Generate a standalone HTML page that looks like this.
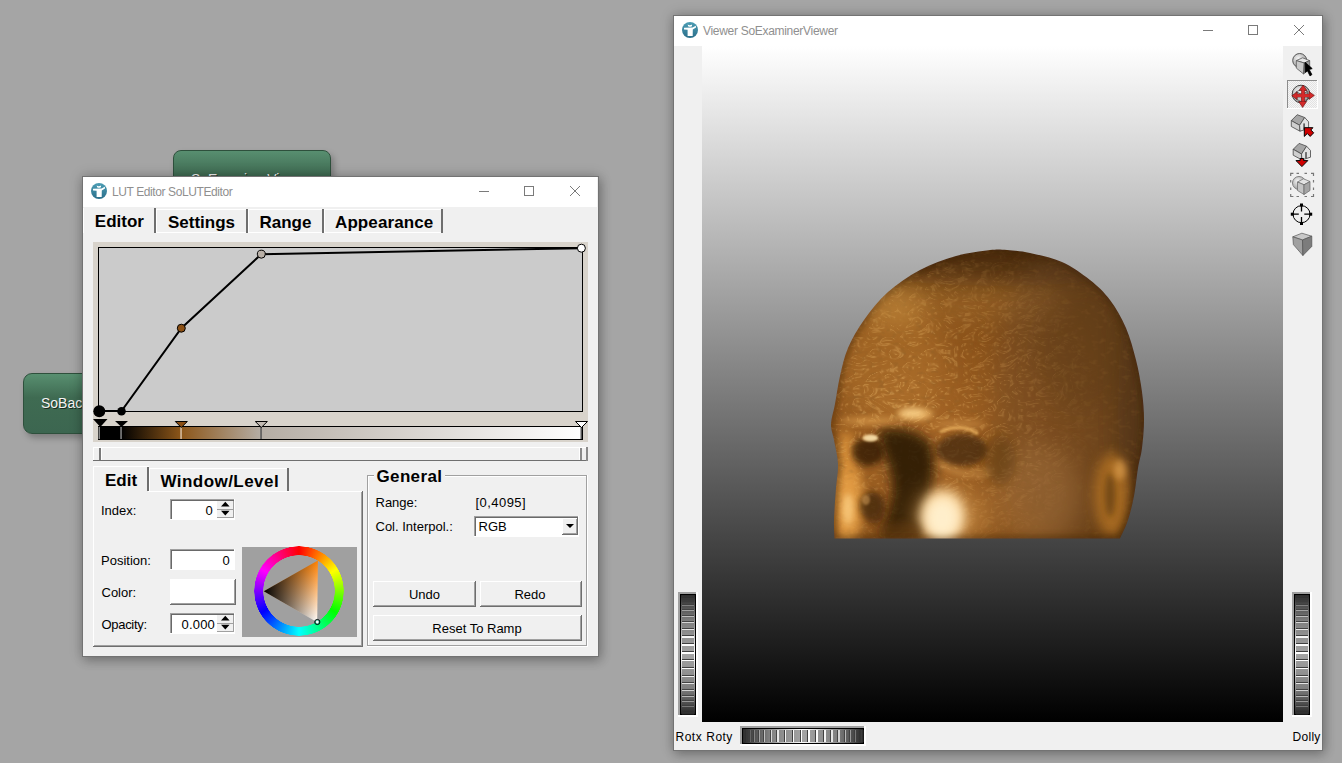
<!DOCTYPE html>
<html><head><meta charset="utf-8"><style>
*{box-sizing:border-box;margin:0;padding:0}
html,body{width:1342px;height:763px;overflow:hidden}
body{background:#a5a5a5;position:relative;font-family:"Liberation Sans",sans-serif;color:#000}
.node{position:absolute;border:1px solid #2e503c;border-radius:8px;background:linear-gradient(#588f70,#3f6b52 40%,#3c6650);box-shadow:3px 4px 6px rgba(0,0,0,.25);overflow:hidden}
.node span{position:absolute;white-space:pre;line-height:1;color:#f4f4f4;font-size:14px;text-shadow:1px 1px 0 #1a2a20}
.win{position:absolute;background:#f0f0f0;border:1px solid #737373;box-shadow:0 0 12px rgba(0,0,0,.22),2px 4px 10px rgba(0,0,0,.2)}
svg{position:absolute;left:0;top:0}
text{font-family:"Liberation Sans",sans-serif;white-space:pre}
.b{font-weight:bold;font-size:17px}
.l{font-size:13px}
.ttl{font-size:12px;fill:#8f8f8f}
</style></head><body>

<div class="node" style="left:173px;top:150px;width:158px;height:62px"><span style="left:17px;top:21px">SoExaminerViewer</span></div>
<div class="node" style="left:23px;top:373px;width:170px;height:61px;border-radius:9px"><span style="left:17px;top:22px">SoBackground</span></div>

<div class="win" style="left:82px;top:176px;width:517px;height:481px"></div>
<div class="win" style="left:673px;top:15px;width:650px;height:736px"></div>

<svg width="1342" height="763" viewBox="0 0 1342 763" shape-rendering="crispEdges">
<defs>
  <linearGradient id="icog" x1="0" y1="0" x2="0" y2="1"><stop offset="0" stop-color="#4c9db4"/><stop offset="1" stop-color="#2b6f8b"/></linearGradient>
  <g id="ico">
    <circle cx="0" cy="0" r="8" fill="url(#icog)" shape-rendering="geometricPrecision"/>
    <path d="M-2.3,-5.4 Q0,-4.2 2.1,-5.6 L1.9,-3.7 Q0,-2.6 -1.9,-3.7 Z M-6,-2.2 L2.5,-2.4 L5.9,-4.3 L6,-2.6 L2.8,-0.6 L2.7,6 L-2.4,6 L-2.4,-0.2 L-6,-0.4 Z" fill="#fff" shape-rendering="geometricPrecision"/>
  </g>
  <linearGradient id="vpg" x1="0" y1="0" x2="0" y2="1"><stop offset="0" stop-color="#fff"/><stop offset="1" stop-color="#000"/></linearGradient>
  <linearGradient id="cbar" x1="98" y1="0" x2="582" y2="0" gradientUnits="userSpaceOnUse">
    <stop offset="0.0475" stop-color="#000"/>
    <stop offset="0.171" stop-color="#8c5619"/>
    <stop offset="0.336" stop-color="#b5ada4"/>
    <stop offset="1" stop-color="#fff"/>
  </linearGradient>
</defs>

<!-- ============ LUT EDITOR ============ -->
<rect x="83" y="177" width="514" height="30" fill="#fff"/>
<use href="#ico" x="99" y="191"/>
<text class="ttl" x="112" y="196" letter-spacing="-0.4">LUT Editor SoLUTEditor</text>
<g fill="none" stroke="#7a7a7a" stroke-width="1">
  <path d="M479,191.5 H489"/>
  <rect x="524.5" y="186.5" width="9" height="9"/>
  <path d="M570,186 L580,196 M580,186 L570,196" shape-rendering="geometricPrecision"/>
</g>

<!-- tabs -->
<g>
  <rect x="83" y="208" width="72" height="25" fill="#f0f0f0"/>
  <rect x="83" y="208" width="1" height="25" fill="#fff"/>
  <rect x="155" y="209" width="286" height="24" fill="#fff"/>
  <rect x="157" y="210" width="89" height="22" fill="#f0f0f0"/>
  <rect x="249" y="210" width="73" height="22" fill="#f0f0f0"/>
  <rect x="325" y="210" width="116" height="22" fill="#f0f0f0"/>
  <rect x="154" y="208" width="2" height="25" fill="#6e6e6e"/>
  <rect x="246" y="209" width="2" height="24" fill="#6e6e6e"/>
  <rect x="322" y="209" width="2" height="24" fill="#6e6e6e"/>
  <rect x="441" y="209" width="2" height="24" fill="#6e6e6e"/>
</g>
<text class="b" x="94.8" y="227">Editor</text>
<text class="b" x="168" y="228">Settings</text>
<text class="b" x="259.5" y="228">Range</text>
<text class="b" x="335" y="228" letter-spacing="0.1">Appearance</text>

<!-- plot -->
<rect x="93" y="242" width="495" height="200" fill="#d8d3cb"/>
<rect x="98" y="247" width="485" height="165" fill="#000"/>
<rect x="99" y="248" width="483" height="163" fill="#cbcbcb"/>
<rect x="98" y="426" width="485" height="14" fill="#000"/>
<rect x="98" y="427" width="484" height="12" fill="url(#cbar)"/>
<g shape-rendering="geometricPrecision">
  <polyline points="99,411 121.5,411 181.3,328.2 261.3,254.2 581.5,248.2" fill="none" stroke="#000" stroke-width="2"/>
  <circle cx="99.3" cy="411.3" r="6" fill="#000"/>
  <circle cx="121.5" cy="411.3" r="4.3" fill="#000"/>
  <circle cx="181.3" cy="328.2" r="4" fill="#8b4f13" stroke="#000" stroke-width="1"/>
  <circle cx="261.3" cy="254.2" r="4" fill="#b9b0a7" stroke="#000" stroke-width="1"/>
  <circle cx="581.4" cy="248.2" r="4" fill="#fff" stroke="#000" stroke-width="1"/>
  <!-- markers -->
  <rect x="98.5" y="427" width="1.5" height="12" fill="#888"/>
  <rect x="120.3" y="427" width="1.5" height="12" fill="#888"/>
  <rect x="180.3" y="427" width="1.5" height="12" fill="#d9c1a6"/>
  <rect x="260.3" y="427" width="1.5" height="12" fill="#555"/>
  <rect x="580.5" y="427" width="1.5" height="12" fill="#555"/>
  <path d="M93,419 H107.5 L100.3,427 Z" fill="#000"/>
  <path d="M115,421 H128 L121.5,427 Z" fill="#000"/>
  <path d="M175.3,421.5 H187.3 L181.3,427.5 Z" fill="#8b4f13" stroke="#000" stroke-width="1"/>
  <path d="M255.3,421.5 H267.3 L261.3,427.5 Z" fill="#c4bcb4" stroke="#000" stroke-width="1"/>
  <path d="M575.5,421.5 H587.5 L581.5,427.5 Z" fill="#fff" stroke="#000" stroke-width="1"/>
</g>

<!-- range slider -->
<rect x="93" y="447" width="495" height="14" fill="#6f6f6f"/>
<rect x="93" y="447" width="494" height="13" fill="#fff"/>
<rect x="94" y="448" width="493" height="12" fill="#f0f0f0"/>
<rect x="99" y="448" width="2" height="12" fill="#7a7a7a"/>
<rect x="101" y="448" width="1" height="12" fill="#fff"/>
<rect x="579" y="448" width="1" height="12" fill="#fff"/>
<rect x="580" y="448" width="2" height="12" fill="#8a8a8a"/>
<rect x="586" y="447" width="2" height="14" fill="#8a8a8a"/>

<!-- bottom tabs -->
<rect x="93" y="466" width="56" height="27" fill="#fff"/>
<rect x="94" y="467" width="54" height="26" fill="#f0f0f0"/>
<rect x="147" y="467" width="2" height="25" fill="#6e6e6e"/>
<rect x="149" y="468" width="139" height="24" fill="#fff"/>
<rect x="150" y="469" width="137" height="22" fill="#f0f0f0"/>
<rect x="287" y="468" width="2" height="24" fill="#6e6e6e"/>
<!-- pane -->
<rect x="93" y="491" width="270" height="156" fill="#6e6e6e"/>
<rect x="93" y="491" width="269" height="155" fill="#fff"/>
<rect x="94" y="492" width="268" height="154" fill="#a0a0a0"/>
<rect x="94" y="492" width="267" height="153" fill="#f0f0f0"/>
<rect x="94" y="491" width="54" height="2" fill="#f0f0f0"/>
<text class="b" x="105" y="486">Edit</text>
<text class="b" x="160.5" y="487" letter-spacing="0.45">Window/Level</text>

<text class="l" x="101" y="515">Index:</text>
<text class="l" x="101" y="565">Position:</text>
<text class="l" x="101.5" y="597">Color:</text>
<text class="l" x="101.5" y="629" letter-spacing="-0.3">Opacity:</text>

<!-- index spin -->
<rect x="170" y="499" width="65" height="21" fill="#fff"/>
<rect x="170" y="499" width="64" height="1" fill="#a0a0a0"/><rect x="170" y="499" width="1" height="20" fill="#a0a0a0"/>
<rect x="171" y="500" width="63" height="1" fill="#696969"/><rect x="171" y="500" width="1" height="19" fill="#696969"/>
<rect x="217" y="501" width="17" height="17" fill="#f0f0f0"/>
<rect x="217" y="509" width="17" height="1" fill="#a0a0a0"/>
<rect x="233" y="501" width="1" height="17" fill="#a0a0a0"/>
<rect x="217" y="517" width="17" height="1" fill="#a0a0a0"/>
<path d="M221,506.5 L225.3,501.8 L229.6,506.5 Z M221,510.8 L229.6,510.8 L225.3,515.5 Z" fill="#000" shape-rendering="geometricPrecision"/>
<text class="l" x="205.5" y="515">0</text>

<!-- position -->
<rect x="170" y="549" width="65" height="21" fill="#fff"/>
<rect x="170" y="549" width="64" height="1" fill="#a0a0a0"/><rect x="170" y="549" width="1" height="20" fill="#a0a0a0"/>
<rect x="171" y="550" width="63" height="1" fill="#696969"/><rect x="171" y="550" width="1" height="19" fill="#696969"/>
<text class="l" x="222.5" y="565">0</text>

<!-- color button -->
<rect x="170" y="579" width="66" height="26" fill="#6e6e6e"/>
<rect x="170" y="579" width="65" height="25" fill="#fff"/>
<rect x="171" y="580" width="64" height="24" fill="#a0a0a0"/>
<rect x="171" y="580" width="63" height="23" fill="#fff"/>

<!-- opacity spin -->
<rect x="170" y="613" width="65" height="21" fill="#fff"/>
<rect x="170" y="613" width="64" height="1" fill="#a0a0a0"/><rect x="170" y="613" width="1" height="20" fill="#a0a0a0"/>
<rect x="171" y="614" width="63" height="1" fill="#696969"/><rect x="171" y="614" width="1" height="19" fill="#696969"/>
<rect x="217" y="615" width="17" height="17" fill="#f0f0f0"/>
<rect x="217" y="623" width="17" height="1" fill="#a0a0a0"/>
<rect x="233" y="615" width="1" height="17" fill="#a0a0a0"/>
<rect x="217" y="631" width="17" height="1" fill="#a0a0a0"/>
<path d="M221,620.5 L225.3,615.8 L229.6,620.5 Z M221,624.8 L229.6,624.8 L225.3,629.5 Z" fill="#000" shape-rendering="geometricPrecision"/>
<text class="l" x="181.5" y="629" letter-spacing="0.2">0.000</text>

<!-- color wheel -->
<rect x="242" y="547" width="115" height="90" fill="#a0a0a0"/>
<foreignObject x="254" y="546" width="90" height="90">
  <div style="width:90px;height:90px;border-radius:50%;background:conic-gradient(#f00,#ff0 60deg,#0f0 120deg,#0ff 180deg,#00f 240deg,#f0f 300deg,#f00 360deg);-webkit-mask:radial-gradient(circle,transparent 35.5px,#000 36px,#000 44.5px,transparent 45px)"></div>
</foreignObject>
<defs>
  <linearGradient id="trg1" x1="263.7" y1="591.2" x2="317.5" y2="591.4" gradientUnits="userSpaceOnUse"><stop offset="0" stop-color="#000"/><stop offset="1" stop-color="#000" stop-opacity="0"/></linearGradient>
  <linearGradient id="trg2" x1="317.9" y1="560.6" x2="317.2" y2="622.2" gradientUnits="userSpaceOnUse"><stop offset="0" stop-color="#ff8000"/><stop offset="1" stop-color="#fff"/></linearGradient>
</defs>
<g shape-rendering="geometricPrecision">
  <path d="M317.9,560.6 L263.7,591.2 L317.2,622.2 Z" fill="url(#trg2)"/>
  <path d="M317.9,560.6 L263.7,591.2 L317.2,622.2 Z" fill="url(#trg1)"/>
  <circle cx="317.3" cy="622" r="2.6" fill="#2a8" stroke="#000" stroke-width=".9"/>
  <circle cx="317.3" cy="622" r="1.4" fill="#fff"/>
</g>

<!-- general group -->
<rect x="367" y="475" width="221" height="172" fill="#fff"/>
<rect x="367" y="475" width="220" height="171" fill="#a0a0a0"/>
<rect x="368" y="476" width="218" height="169" fill="#fff"/>
<rect x="369" y="477" width="217" height="168" fill="#f0f0f0"/>
<rect x="374" y="466" width="71" height="14" fill="#f0f0f0"/>
<text class="b" x="376.5" y="482" letter-spacing="0.35">General</text>
<text class="l" x="375.5" y="507">Range:</text>
<text class="l" x="475.5" y="507" letter-spacing="0.45">[0,4095]</text>
<text class="l" x="375.5" y="531">Col. Interpol.:</text>

<!-- combo -->
<rect x="474" y="516" width="105" height="21" fill="#fff"/>
<rect x="474" y="516" width="104" height="1" fill="#a0a0a0"/><rect x="474" y="516" width="1" height="20" fill="#a0a0a0"/>
<rect x="475" y="517" width="103" height="1" fill="#696969"/><rect x="475" y="517" width="1" height="19" fill="#696969"/>
<rect x="562" y="518" width="16" height="17" fill="#6e6e6e"/>
<rect x="562" y="518" width="15" height="16" fill="#fff"/>
<rect x="563" y="519" width="14" height="15" fill="#a0a0a0"/>
<rect x="563" y="519" width="13" height="14" fill="#f0f0f0"/>
<path d="M566,524 H574 L570,528 Z" fill="#000" shape-rendering="geometricPrecision"/>
<text class="l" x="478.5" y="531">RGB</text>

<!-- buttons -->
<g>
  <rect x="373" y="581" width="103" height="26" fill="#6e6e6e"/>
  <rect x="373" y="581" width="102" height="25" fill="#fff"/>
  <rect x="374" y="582" width="101" height="24" fill="#a0a0a0"/>
  <rect x="374" y="582" width="100" height="23" fill="#f0f0f0"/>
  <rect x="480" y="581" width="102" height="26" fill="#6e6e6e"/>
  <rect x="480" y="581" width="101" height="25" fill="#fff"/>
  <rect x="481" y="582" width="100" height="24" fill="#a0a0a0"/>
  <rect x="481" y="582" width="99" height="23" fill="#f0f0f0"/>
  <rect x="373" y="615" width="209" height="26" fill="#6e6e6e"/>
  <rect x="373" y="615" width="208" height="25" fill="#fff"/>
  <rect x="374" y="616" width="207" height="24" fill="#a0a0a0"/>
  <rect x="374" y="616" width="206" height="23" fill="#f0f0f0"/>
</g>
<text class="l" x="424.5" y="599" text-anchor="middle">Undo</text>
<text class="l" x="530" y="599" text-anchor="middle">Redo</text>
<text class="l" x="477" y="633" text-anchor="middle">Reset To Ramp</text>

<!-- ============ VIEWER ============ -->
<rect x="674" y="16" width="648" height="30" fill="#fff"/>
<use href="#ico" x="690" y="30"/>
<text class="ttl" x="703" y="35" letter-spacing="-0.3">Viewer SoExaminerViewer</text>
<g fill="none" stroke="#7a7a7a" stroke-width="1">
  <path d="M1203,30.5 H1213"/>
  <rect x="1248.5" y="25.5" width="9" height="9"/>
  <path d="M1294,25 L1304,35 M1304,25 L1294,35" shape-rendering="geometricPrecision"/>
</g>
<rect x="702" y="46" width="581" height="676" fill="url(#vpg)"/>
<defs>
<clipPath id="hclip"><path d="M834.5,538.5 C834.4,535.4 833.8,528.4 834,520 C834.2,511.6 835.3,497.3 836,488 C836.7,478.7 838.3,472.0 838,464 C837.7,456.0 835.2,446.7 834,440 C832.8,433.3 830.8,430.0 831,424 C831.2,418.0 833.5,412.0 835,404 C836.5,396.0 837.8,385.3 840,376 C842.2,366.7 844.0,357.3 848,348 C852.0,338.7 857.3,329.3 864,320 C870.7,310.7 878.7,300.3 888,292 C897.3,283.7 908.7,276.0 920,270 C931.3,264.0 944.3,259.3 956,256 C967.7,252.7 981.5,251.0 990,250 C998.5,249.0 1000.3,249.5 1007,250 C1013.7,250.5 1020.8,251.0 1030,253 C1039.2,255.0 1052.0,257.5 1062,262 C1072.0,266.5 1082.0,273.7 1090,280 C1098.0,286.3 1104.0,292.0 1110,300 C1116.0,308.0 1121.7,318.0 1126,328 C1130.3,338.0 1133.3,349.3 1136,360 C1138.7,370.7 1140.7,382.0 1142,392 C1143.3,402.0 1144.0,410.7 1144,420 C1144.0,429.3 1143.0,440.0 1142,448 C1141.0,456.0 1139.3,460.0 1138,468 C1136.7,476.0 1135.7,487.3 1134,496 C1132.3,504.7 1130.3,512.9 1128,520 C1125.7,527.1 1121.3,535.4 1120,538.5 Z"/></clipPath>
<radialGradient id="hg" cx="920" cy="440" r="270" gradientUnits="userSpaceOnUse">
 <stop offset="0" stop-color="#aa7230"/><stop offset="0.45" stop-color="#88571e"/><stop offset="0.8" stop-color="#634014"/><stop offset="1" stop-color="#40280a"/>
</radialGradient>
<filter id="bl3" x="-50%" y="-50%" width="200%" height="200%"><feGaussianBlur stdDeviation="3"/></filter>
<filter id="bl6" x="-50%" y="-50%" width="200%" height="200%"><feGaussianBlur stdDeviation="6"/></filter>
<filter id="bl12" x="-50%" y="-50%" width="200%" height="200%"><feGaussianBlur stdDeviation="12"/></filter>
<filter id="bl1" x="-50%" y="-50%" width="200%" height="200%"><feGaussianBlur stdDeviation="1.2"/></filter>
<filter id="bump" x="820" y="240" width="340" height="310" filterUnits="userSpaceOnUse">
  <feTurbulence type="turbulence" baseFrequency="0.055 0.08" numOctaves="2" seed="9" result="noise"/>
  <feSpecularLighting in="noise" surfaceScale="5" specularConstant="1.1" specularExponent="20" lighting-color="#ffcc80" result="spec">
    <feDistantLight azimuth="230" elevation="50"/>
  </feSpecularLighting>
  <feComposite in="spec" in2="SourceGraphic" operator="in"/>
</filter>
<radialGradient id="bmask" cx="910" cy="400" r="190" gradientUnits="userSpaceOnUse"><stop offset="0" stop-color="#fff" stop-opacity="1"/><stop offset="0.55" stop-color="#fff" stop-opacity=".5"/><stop offset="1" stop-color="#fff" stop-opacity="0"/></radialGradient>
<filter id="noiseD" x="0" y="0" width="100%" height="100%">
  <feTurbulence type="fractalNoise" baseFrequency="0.13 0.2" numOctaves="2" seed="3"/>
  <feColorMatrix type="matrix" values="0 0 0 0 0.24  0 0 0 0 0.13  0 0 0 0 0.03  3.2 0 0 0 -1.75" />
</filter>
<filter id="noiseL" x="0" y="0" width="100%" height="100%">
  <feTurbulence type="fractalNoise" baseFrequency="0.13 0.2" numOctaves="2" seed="11"/>
  <feColorMatrix type="matrix" values="0 0 0 0 0.95  0 0 0 0 0.78  0 0 0 0 0.45  3.2 0 0 0 -1.8" />
</filter>
</defs>
<g clip-path="url(#hclip)" shape-rendering="geometricPrecision">
<rect x="820" y="240" width="340" height="310" fill="url(#hg)"/>
<ellipse cx="1000" cy="256" rx="175" ry="30" fill="#3e2808" opacity=".65" filter="url(#bl12)"/>
<ellipse cx="1138" cy="410" rx="20" ry="150" fill="#3a2608" opacity=".7" filter="url(#bl12)"/>
<ellipse cx="960" cy="300" rx="110" ry="22" fill="#b88a44" opacity=".35" filter="url(#bl12)"/>
<ellipse cx="890" cy="360" rx="55" ry="60" fill="#b8843a" opacity=".45" filter="url(#bl12)"/>
<ellipse cx="1075" cy="390" rx="80" ry="150" fill="#6c5030" opacity=".4" filter="url(#bl12)"/>
<ellipse cx="1080" cy="350" rx="45" ry="60" fill="#5a3e18" opacity=".3" filter="url(#bl12)"/>
<ellipse cx="846" cy="490" rx="13" ry="60" fill="#e0a448" opacity=".85" filter="url(#bl6)"/>
<ellipse cx="1035" cy="495" rx="45" ry="50" fill="#a27a4c" opacity=".5" filter="url(#bl12)"/>
<rect x="820" y="240" width="340" height="310" filter="url(#noiseD)" opacity=".3"/>
<rect x="820" y="240" width="340" height="310" fill="url(#bmask)" filter="url(#bump)" style="mix-blend-mode:screen" opacity=".32"/>

<ellipse cx="850" cy="505" rx="14" ry="34" fill="#e8b058" opacity=".7" filter="url(#bl6)"/>
<ellipse cx="848" cy="508" rx="5" ry="14" fill="#f8d890" opacity=".6" filter="url(#bl3)"/>
<path d="M878,430 C900,426 922,430 932,445 C938,470 930,500 926,537 L880,537 C885,520 895,500 892,480 C890,465 880,450 878,430 Z" fill="#241404" opacity=".85" filter="url(#bl6)"/>
<ellipse cx="874" cy="508" rx="12" ry="16" fill="#3a2208" opacity=".6" filter="url(#bl3)"/>
<ellipse cx="868" cy="452" rx="16" ry="14" fill="#2a1806" opacity=".75" filter="url(#bl3)"/>
<ellipse cx="870" cy="438" rx="8" ry="3.5" fill="#f8e0a8" opacity=".8" filter="url(#bl1)"/>
<ellipse cx="870" cy="505" rx="11" ry="12" fill="#4a3010" opacity=".5" filter="url(#bl3)"/>
<ellipse cx="866" cy="500" rx="4" ry="5" fill="#d8b070" opacity=".5" filter="url(#bl1)"/>
<ellipse cx="915" cy="414" rx="18" ry="6" fill="#f8d488" opacity=".8" filter="url(#bl3)"/>
<ellipse cx="870" cy="421" rx="30" ry="4" fill="#e8b868" opacity=".6" filter="url(#bl3)"/>
<ellipse cx="960" cy="424" rx="26" ry="4" fill="#d8a860" opacity=".5" filter="url(#bl3)"/>
<ellipse cx="962" cy="450" rx="26" ry="16" fill="#34200a" opacity=".65" filter="url(#bl3)"/>
<path d="M940,432 C952,426 968,426 978,434" stroke="#f0c878" stroke-width="3" fill="none" opacity=".75" filter="url(#bl1)"/>
<ellipse cx="961" cy="444" rx="10" ry="5" fill="#5a3a14" opacity=".6" filter="url(#bl1)"/>
<path d="M938,462 C955,474 975,478 992,470" stroke="#e8c078" stroke-width="4" fill="none" opacity=".6" filter="url(#bl3)"/>
<ellipse cx="1000" cy="460" rx="15" ry="25" fill="#4e3410" opacity=".45" filter="url(#bl6)"/>
<ellipse cx="950" cy="518" rx="38" ry="30" fill="#d8a860" opacity=".55" filter="url(#bl12)"/>
<ellipse cx="943" cy="516" rx="22" ry="26" fill="#fff2cc" opacity="1" filter="url(#bl6)"/>
<ellipse cx="900" cy="530" rx="22" ry="9" fill="#6a4418" opacity=".45" filter="url(#bl3)"/>
<ellipse cx="1112" cy="495" rx="18" ry="42" fill="#b07a2c" opacity=".85" filter="url(#bl6)"/>
<ellipse cx="1110" cy="495" rx="5" ry="22" fill="#4a3010" opacity=".55" filter="url(#bl3)"/>
<ellipse cx="1120" cy="470" rx="6" ry="10" fill="#e8b868" opacity=".6" filter="url(#bl3)"/>
<path d="M834.5,538.5 C834.4,535.4 833.8,528.4 834,520 C834.2,511.6 835.3,497.3 836,488 C836.7,478.7 838.3,472.0 838,464 C837.7,456.0 835.2,446.7 834,440 C832.8,433.3 830.8,430.0 831,424 C831.2,418.0 833.5,412.0 835,404 C836.5,396.0 837.8,385.3 840,376 C842.2,366.7 844.0,357.3 848,348 C852.0,338.7 857.3,329.3 864,320 C870.7,310.7 878.7,300.3 888,292 C897.3,283.7 908.7,276.0 920,270 C931.3,264.0 944.3,259.3 956,256 C967.7,252.7 981.5,251.0 990,250 C998.5,249.0 1000.3,249.5 1007,250 C1013.7,250.5 1020.8,251.0 1030,253 C1039.2,255.0 1052.0,257.5 1062,262 C1072.0,266.5 1082.0,273.7 1090,280 C1098.0,286.3 1104.0,292.0 1110,300 C1116.0,308.0 1121.7,318.0 1126,328 C1130.3,338.0 1133.3,349.3 1136,360 C1138.7,370.7 1140.7,382.0 1142,392 C1143.3,402.0 1144.0,410.7 1144,420 C1144.0,429.3 1143.0,440.0 1142,448 C1141.0,456.0 1139.3,460.0 1138,468 C1136.7,476.0 1135.7,487.3 1134,496 C1132.3,504.7 1130.3,512.9 1128,520 C1125.7,527.1 1121.3,535.4 1120,538.5 Z" fill="none" stroke="#3a240a" stroke-width="5" filter="url(#bl3)" opacity=".55"/>
<rect x="820" y="240" width="340" height="310" fill="#ffd098" style="mix-blend-mode:multiply" opacity=".45"/>
<ellipse cx="895" cy="305" rx="30" ry="22" fill="#e0a850" opacity=".3" filter="url(#bl12)"/>
<ellipse cx="942" cy="518" rx="16" ry="19" fill="#fff4d8" opacity=".75" filter="url(#bl6)"/>
<ellipse cx="912" cy="413" rx="12" ry="4" fill="#ffe0a0" opacity=".55" filter="url(#bl3)"/>
<ellipse cx="871" cy="438" rx="7" ry="3" fill="#fff0c0" opacity=".6" filter="url(#bl1)"/>
<ellipse cx="848" cy="510" rx="5" ry="16" fill="#ffd890" opacity=".45" filter="url(#bl3)"/>
</g>
<defs>
 <radialGradient id="sph" cx="0.4" cy="0.35" r="0.7"><stop offset="0" stop-color="#f4f4f4"/><stop offset="1" stop-color="#9a9a9a"/></radialGradient>
 <pattern id="chk" width="2" height="2" patternUnits="userSpaceOnUse"><rect width="2" height="2" fill="#f6f6f6"/><rect width="1" height="1" fill="#e2e2e2"/><rect x="1" y="1" width="1" height="1" fill="#e2e2e2"/></pattern>
</defs>
<g shape-rendering="geometricPrecision">
<!-- 1 pick -->
<circle cx="1299.7" cy="60.5" r="7" fill="url(#sph)" stroke="#555" stroke-width="1"/>
<path d="M1296.3,60.6 L1302.6,57.8 L1309.7,60.6 L1304.3,63 Z" fill="#e6e6e6" stroke="#555" stroke-width=".8"/>
<path d="M1296.3,60.6 L1304.3,63 L1303.6,74 L1296.3,68.1 Z" fill="#c8c8c8" stroke="#555" stroke-width=".8"/>
<path d="M1304.3,63 L1309.7,60.6 L1309.7,68 L1303.6,74 Z" fill="#9c9c9c" stroke="#555" stroke-width=".8"/>
<path d="M1305.1,62.3 L1312.2,68.6 L1309.2,69.6 L1311.9,74.6 L1310,75.9 L1307.6,71 L1305.2,72.4 Z" fill="#000" stroke="#000" stroke-width=".8" stroke-linejoin="round"/>

<!-- 2 view (pressed) -->
<rect x="1287" y="80" width="31" height="29" fill="#fff"/>
<rect x="1287" y="80" width="30" height="28" fill="#8c8c8c"/>
<rect x="1288" y="81" width="29" height="27" fill="url(#chk)"/>
<circle cx="1301" cy="94" r="8.8" fill="url(#sph)" stroke="#444" stroke-width="1"/>
<path d="M1296,92 L1301.5,89 L1307.5,91.5 L1302,94.5 Z" fill="#e4e4e4" stroke="#555" stroke-width=".7"/>
<path d="M1296,92 L1302,94.5 L1302,102 L1296,99 Z" fill="#c6c6c6" stroke="#555" stroke-width=".7"/>
<path d="M1302,94.5 L1307.5,91.5 L1307.5,99 L1302,102 Z" fill="#a8a8a8" stroke="#555" stroke-width=".7"/>
<g fill="#d42a2a" stroke="#5a1010" stroke-width=".6" stroke-linejoin="round">
<path d="M1301.6,90 H1304.4 V101.5 H1301.6 Z"/>
<path d="M1296.5,94.2 H1309.5 V97 H1296.5 Z"/>
<path d="M1303.2,85 L1307,90.5 L1299,90.5 Z"/>
<path d="M1302.6,107.5 L1298.6,101.5 L1306.6,101.5 Z"/>
<path d="M1291.7,95.8 L1297.2,91.8 L1297.2,99.6 Z"/>
<path d="M1314.4,95.4 L1309,91.6 L1309,99.4 Z"/>
</g>
<path d="M1301.6,90 H1304.4 V101.5 H1301.6 Z M1296.5,94.2 H1309.5 V97 H1296.5 Z" fill="#d42a2a"/>

<!-- 3 set home -->
<path d="M1291.3,120.6 L1297.2,114.7 L1304.7,117.5 L1299.6,125.3 Z" fill="#a6a6a6" stroke="#444" stroke-width=".8" stroke-linejoin="round"/>
<path d="M1291.3,120.6 L1299.6,125.3 L1300,131.2 L1291.3,126.5 Z" fill="#cfcfcf" stroke="#444" stroke-width=".8" stroke-linejoin="round"/>
<path d="M1299.6,125.3 L1304.7,117.5 L1308.6,121.8 L1308.6,128.5 L1300,131.2 Z" fill="#e2e2e2" stroke="#444" stroke-width=".8" stroke-linejoin="round"/>
<rect x="1303.3" y="123.4" width="1.6" height="6.3" fill="#555"/>
<path d="M1304.3,127.7 L1312.9,127.7 L1310.8,130 L1313.7,132.8 L1310.2,136.4 L1307.3,133.5 L1304.3,136.4 Z" fill="#d00000" stroke="#000" stroke-width="1" stroke-linejoin="round"/>

<!-- 4 go home -->
<path d="M1293.2,149.3 L1299.1,143.4 L1306.6,146.2 L1301.5,154 Z" fill="#a6a6a6" stroke="#444" stroke-width=".8" stroke-linejoin="round"/>
<path d="M1293.2,149.3 L1301.5,154 L1301.9,159.9 L1293.2,155.2 Z" fill="#cfcfcf" stroke="#444" stroke-width=".8" stroke-linejoin="round"/>
<path d="M1301.5,154 L1306.6,146.2 L1310.5,150.5 L1310.5,157.2 L1301.9,159.9 Z" fill="#e2e2e2" stroke="#444" stroke-width=".8" stroke-linejoin="round"/>
<rect x="1305.2" y="152.1" width="1.6" height="6.3" fill="#555"/>
<path d="M1300.2,158.5 L1303.6,158.5 L1303.6,160.6 L1307.8,160.6 L1301.9,166.6 L1296,160.6 L1300.2,160.6 Z" fill="#d00000" stroke="#000" stroke-width="1" stroke-linejoin="round"/>

<!-- 5 view all -->
<g fill="none" stroke="#777" stroke-width="1.2">
 <path d="M1290.7,176 V173.4 H1293.4 M1311,173.4 H1313.5 V176 M1313.5,194 V196.5 H1311 M1293.4,196.5 H1290.7 V194"/>
 <path d="M1296.5,173.4 H1299 M1304.5,173.4 H1307 M1296.5,196.5 H1299 M1304.5,196.5 H1307 M1290.7,180 V182.5 M1290.7,187.5 V190 M1313.5,180 V182.5 M1313.5,187.5 V190"/>
</g>
<circle cx="1299" cy="183" r="6.5" fill="url(#sph)" stroke="#666" stroke-width=".8"/>
<path d="M1297.5,182 L1303.5,178.8 L1310,181.5 L1304,184.8 Z" fill="#e2e2e2" stroke="#666" stroke-width=".7"/>
<path d="M1297.5,182 L1304,184.8 L1304,194.5 L1297.5,190.5 Z" fill="#c4c4c4" stroke="#666" stroke-width=".7"/>
<path d="M1304,184.8 L1310,181.5 L1310,190.5 L1304,194.5 Z" fill="#a4a4a4" stroke="#666" stroke-width=".7"/>

<!-- 6 seek -->
<circle cx="1301.5" cy="214.2" r="8.5" fill="none" stroke="#000" stroke-width="1"/>
<path d="M1301.5,205 V211.5 M1301.5,217 V223.5 M1292.3,214.2 H1298.8 M1304.3,214.2 H1310.7" stroke="#000" stroke-width="1.3"/>
<rect x="1300" y="203.5" width="3" height="3" fill="#000"/>
<rect x="1300" y="222" width="3" height="3" fill="#000"/>
<rect x="1290.8" y="212.7" width="3" height="3" fill="#000"/>
<rect x="1309.2" y="212.7" width="3" height="3" fill="#000"/>

<!-- 7 perspective cube -->
<path d="M1292.8,236.8 L1301.9,233.2 L1311.8,236.2 L1302.5,240 Z" fill="#c8c8c8" stroke="#555" stroke-width=".7" stroke-linejoin="round"/>
<path d="M1292.8,236.8 L1302.5,240 L1302.9,255.5 L1293.4,244.6 Z" fill="#a0a0a0" stroke="#555" stroke-width=".7" stroke-linejoin="round"/>
<path d="M1302.5,240 L1311.8,236.2 L1311.8,246.4 L1302.9,255.5 Z" fill="#7c7c7c" stroke="#555" stroke-width=".7" stroke-linejoin="round"/>
</g>

<g transform="translate(740,726)"><rect x="0" y="0" width="126" height="20" fill="#fff"/>
<rect x="0" y="0" width="124" height="18" fill="#a0a0a0"/>
<rect x="2" y="2" width="122" height="16" fill="#000"/>
<rect x="3" y="3" width="120" height="14" fill="#fff"/>
<defs><linearGradient id="wh740" x1="0" x2="1" y1="0" y2="0"><stop offset="0" stop-color="#262626"/><stop offset="0.07" stop-color="#464646"/><stop offset="0.22" stop-color="#808080"/><stop offset="0.5" stop-color="#a4a4a4"/><stop offset="0.78" stop-color="#808080"/><stop offset="0.93" stop-color="#464646"/><stop offset="1" stop-color="#262626"/></linearGradient><linearGradient id="wh740w" x1="0" x2="1" y1="0" y2="0"><stop offset="0" stop-color="#fff" stop-opacity="0"/><stop offset="0.25" stop-color="#fff" stop-opacity=".15"/><stop offset="0.5" stop-color="#fff" stop-opacity="1"/><stop offset="0.75" stop-color="#fff" stop-opacity=".15"/><stop offset="1" stop-color="#fff" stop-opacity="0"/></linearGradient></defs>
<rect x="3" y="3" width="120" height="14" fill="url(#wh740)"/>
<rect x="3" y="3" width="120" height="1" fill="url(#wh740w)"/>
<rect x="3" y="16" width="120" height="1" fill="url(#wh740w)"/>
<rect x="3.06" y="4" width="1" height="12" fill="#3a3a3a" opacity="0.38"/>
<rect x="4.06" y="4" width="0.30" height="12" fill="#fff" opacity="0.00"/>
<rect x="3.96" y="4" width="1" height="12" fill="#3a3a3a" opacity="0.46"/>
<rect x="4.96" y="4" width="0.30" height="12" fill="#fff" opacity="0.03"/>
<rect x="5.90" y="4" width="1" height="12" fill="#3a3a3a" opacity="0.53"/>
<rect x="6.90" y="4" width="0.46" height="12" fill="#fff" opacity="0.09"/>
<rect x="8.86" y="4" width="1" height="12" fill="#3a3a3a" opacity="0.61"/>
<rect x="9.86" y="4" width="0.65" height="12" fill="#fff" opacity="0.19"/>
<rect x="12.78" y="4" width="1" height="12" fill="#3a3a3a" opacity="0.68"/>
<rect x="13.78" y="4" width="0.82" height="12" fill="#fff" opacity="0.30"/>
<rect x="17.59" y="4" width="1" height="12" fill="#3a3a3a" opacity="0.74"/>
<rect x="18.59" y="4" width="0.98" height="12" fill="#fff" opacity="0.43"/>
<rect x="23.21" y="4" width="1" height="12" fill="#3a3a3a" opacity="0.80"/>
<rect x="24.21" y="4" width="1.12" height="12" fill="#fff" opacity="0.56"/>
<rect x="29.53" y="4" width="1" height="12" fill="#3a3a3a" opacity="0.85"/>
<rect x="30.53" y="4" width="1.24" height="12" fill="#fff" opacity="0.69"/>
<rect x="36.45" y="4" width="1" height="12" fill="#3a3a3a" opacity="0.89"/>
<rect x="37.45" y="4" width="1.35" height="12" fill="#fff" opacity="0.80"/>
<rect x="43.84" y="4" width="1" height="12" fill="#3a3a3a" opacity="0.92"/>
<rect x="44.84" y="4" width="1.42" height="12" fill="#fff" opacity="0.90"/>
<rect x="51.57" y="4" width="1" height="12" fill="#3a3a3a" opacity="0.94"/>
<rect x="52.57" y="4" width="1.47" height="12" fill="#fff" opacity="0.96"/>
<rect x="59.50" y="4" width="1" height="12" fill="#3a3a3a" opacity="0.95"/>
<rect x="60.50" y="4" width="1.50" height="12" fill="#fff" opacity="1.00"/>
<rect x="67.49" y="4" width="1" height="12" fill="#3a3a3a" opacity="0.95"/>
<rect x="68.49" y="4" width="1.50" height="12" fill="#fff" opacity="0.99"/>
<rect x="75.41" y="4" width="1" height="12" fill="#3a3a3a" opacity="0.94"/>
<rect x="76.41" y="4" width="1.47" height="12" fill="#fff" opacity="0.96"/>
<rect x="83.10" y="4" width="1" height="12" fill="#3a3a3a" opacity="0.92"/>
<rect x="84.10" y="4" width="1.41" height="12" fill="#fff" opacity="0.89"/>
<rect x="90.44" y="4" width="1" height="12" fill="#3a3a3a" opacity="0.88"/>
<rect x="91.44" y="4" width="1.33" height="12" fill="#fff" opacity="0.79"/>
<rect x="97.29" y="4" width="1" height="12" fill="#3a3a3a" opacity="0.84"/>
<rect x="98.29" y="4" width="1.23" height="12" fill="#fff" opacity="0.67"/>
<rect x="103.53" y="4" width="1" height="12" fill="#3a3a3a" opacity="0.79"/>
<rect x="104.53" y="4" width="1.11" height="12" fill="#fff" opacity="0.54"/>
<rect x="109.05" y="4" width="1" height="12" fill="#3a3a3a" opacity="0.73"/>
<rect x="110.05" y="4" width="0.96" height="12" fill="#fff" opacity="0.41"/>
<rect x="113.76" y="4" width="1" height="12" fill="#3a3a3a" opacity="0.67"/>
<rect x="114.76" y="4" width="0.80" height="12" fill="#fff" opacity="0.28"/>
<rect x="117.56" y="4" width="1" height="12" fill="#3a3a3a" opacity="0.60"/>
<rect x="118.56" y="4" width="0.62" height="12" fill="#fff" opacity="0.17"/>
<rect x="120.39" y="4" width="1" height="12" fill="#3a3a3a" opacity="0.52"/>
<rect x="121.39" y="4" width="0.44" height="12" fill="#fff" opacity="0.08"/>
<rect x="122.21" y="4" width="1" height="12" fill="#3a3a3a" opacity="0.45"/>
<rect x="123.21" y="4" width="0.30" height="12" fill="#fff" opacity="0.03"/>
<rect x="122.97" y="4" width="1" height="12" fill="#3a3a3a" opacity="0.37"/>
<rect x="123.97" y="4" width="0.30" height="12" fill="#fff" opacity="0.00"/></g><g transform="matrix(0,1,1,0,678,592)"><rect x="0" y="0" width="125" height="20" fill="#fff"/>
<rect x="0" y="0" width="123" height="18" fill="#a0a0a0"/>
<rect x="2" y="2" width="121" height="16" fill="#000"/>
<rect x="3" y="3" width="119" height="14" fill="#fff"/>
<defs><linearGradient id="wv678" x1="0" x2="1" y1="0" y2="0"><stop offset="0" stop-color="#262626"/><stop offset="0.07" stop-color="#464646"/><stop offset="0.22" stop-color="#808080"/><stop offset="0.5" stop-color="#a4a4a4"/><stop offset="0.78" stop-color="#808080"/><stop offset="0.93" stop-color="#464646"/><stop offset="1" stop-color="#262626"/></linearGradient><linearGradient id="wv678w" x1="0" x2="1" y1="0" y2="0"><stop offset="0" stop-color="#fff" stop-opacity="0"/><stop offset="0.25" stop-color="#fff" stop-opacity=".15"/><stop offset="0.5" stop-color="#fff" stop-opacity="1"/><stop offset="0.75" stop-color="#fff" stop-opacity=".15"/><stop offset="1" stop-color="#fff" stop-opacity="0"/></linearGradient></defs>
<rect x="3" y="3" width="119" height="14" fill="url(#wv678)"/>
<rect x="3" y="3" width="119" height="1" fill="url(#wv678w)"/>
<rect x="3" y="16" width="119" height="1" fill="url(#wv678w)"/>
<rect x="3.03" y="4" width="1" height="12" fill="#3a3a3a" opacity="0.37"/>
<rect x="4.03" y="4" width="0.30" height="12" fill="#fff" opacity="0.00"/>
<rect x="3.83" y="4" width="1" height="12" fill="#3a3a3a" opacity="0.45"/>
<rect x="4.83" y="4" width="0.30" height="12" fill="#fff" opacity="0.03"/>
<rect x="5.69" y="4" width="1" height="12" fill="#3a3a3a" opacity="0.53"/>
<rect x="6.69" y="4" width="0.45" height="12" fill="#fff" opacity="0.09"/>
<rect x="8.57" y="4" width="1" height="12" fill="#3a3a3a" opacity="0.60"/>
<rect x="9.57" y="4" width="0.63" height="12" fill="#fff" opacity="0.18"/>
<rect x="12.43" y="4" width="1" height="12" fill="#3a3a3a" opacity="0.67"/>
<rect x="13.43" y="4" width="0.81" height="12" fill="#fff" opacity="0.29"/>
<rect x="17.19" y="4" width="1" height="12" fill="#3a3a3a" opacity="0.74"/>
<rect x="18.19" y="4" width="0.97" height="12" fill="#fff" opacity="0.42"/>
<rect x="22.77" y="4" width="1" height="12" fill="#3a3a3a" opacity="0.80"/>
<rect x="23.77" y="4" width="1.12" height="12" fill="#fff" opacity="0.55"/>
<rect x="29.07" y="4" width="1" height="12" fill="#3a3a3a" opacity="0.85"/>
<rect x="30.07" y="4" width="1.24" height="12" fill="#fff" opacity="0.68"/>
<rect x="35.97" y="4" width="1" height="12" fill="#3a3a3a" opacity="0.89"/>
<rect x="36.97" y="4" width="1.34" height="12" fill="#fff" opacity="0.80"/>
<rect x="43.35" y="4" width="1" height="12" fill="#3a3a3a" opacity="0.92"/>
<rect x="44.35" y="4" width="1.42" height="12" fill="#fff" opacity="0.90"/>
<rect x="51.07" y="4" width="1" height="12" fill="#3a3a3a" opacity="0.94"/>
<rect x="52.07" y="4" width="1.47" height="12" fill="#fff" opacity="0.96"/>
<rect x="59.00" y="4" width="1" height="12" fill="#3a3a3a" opacity="0.95"/>
<rect x="60.00" y="4" width="1.50" height="12" fill="#fff" opacity="1.00"/>
<rect x="66.99" y="4" width="1" height="12" fill="#3a3a3a" opacity="0.95"/>
<rect x="67.99" y="4" width="1.50" height="12" fill="#fff" opacity="0.99"/>
<rect x="74.91" y="4" width="1" height="12" fill="#3a3a3a" opacity="0.94"/>
<rect x="75.91" y="4" width="1.47" height="12" fill="#fff" opacity="0.96"/>
<rect x="82.59" y="4" width="1" height="12" fill="#3a3a3a" opacity="0.91"/>
<rect x="83.59" y="4" width="1.41" height="12" fill="#fff" opacity="0.89"/>
<rect x="89.92" y="4" width="1" height="12" fill="#3a3a3a" opacity="0.88"/>
<rect x="90.92" y="4" width="1.33" height="12" fill="#fff" opacity="0.79"/>
<rect x="96.75" y="4" width="1" height="12" fill="#3a3a3a" opacity="0.84"/>
<rect x="97.75" y="4" width="1.23" height="12" fill="#fff" opacity="0.67"/>
<rect x="102.96" y="4" width="1" height="12" fill="#3a3a3a" opacity="0.79"/>
<rect x="103.96" y="4" width="1.10" height="12" fill="#fff" opacity="0.54"/>
<rect x="108.45" y="4" width="1" height="12" fill="#3a3a3a" opacity="0.73"/>
<rect x="109.45" y="4" width="0.95" height="12" fill="#fff" opacity="0.40"/>
<rect x="113.10" y="4" width="1" height="12" fill="#3a3a3a" opacity="0.67"/>
<rect x="114.10" y="4" width="0.79" height="12" fill="#fff" opacity="0.28"/>
<rect x="116.84" y="4" width="1" height="12" fill="#3a3a3a" opacity="0.59"/>
<rect x="117.84" y="4" width="0.61" height="12" fill="#fff" opacity="0.17"/>
<rect x="119.60" y="4" width="1" height="12" fill="#3a3a3a" opacity="0.52"/>
<rect x="120.60" y="4" width="0.42" height="12" fill="#fff" opacity="0.08"/>
<rect x="121.33" y="4" width="1" height="12" fill="#3a3a3a" opacity="0.44"/>
<rect x="122.33" y="4" width="0.30" height="12" fill="#fff" opacity="0.02"/>
<rect x="121.99" y="4" width="1" height="12" fill="#3a3a3a" opacity="0.36"/>
<rect x="122.99" y="4" width="0.30" height="12" fill="#fff" opacity="0.00"/></g><g transform="matrix(0,1,1,0,1292,592)"><rect x="0" y="0" width="125" height="20" fill="#fff"/>
<rect x="0" y="0" width="123" height="18" fill="#a0a0a0"/>
<rect x="2" y="2" width="121" height="16" fill="#000"/>
<rect x="3" y="3" width="119" height="14" fill="#fff"/>
<defs><linearGradient id="wv1292" x1="0" x2="1" y1="0" y2="0"><stop offset="0" stop-color="#262626"/><stop offset="0.07" stop-color="#464646"/><stop offset="0.22" stop-color="#808080"/><stop offset="0.5" stop-color="#a4a4a4"/><stop offset="0.78" stop-color="#808080"/><stop offset="0.93" stop-color="#464646"/><stop offset="1" stop-color="#262626"/></linearGradient><linearGradient id="wv1292w" x1="0" x2="1" y1="0" y2="0"><stop offset="0" stop-color="#fff" stop-opacity="0"/><stop offset="0.25" stop-color="#fff" stop-opacity=".15"/><stop offset="0.5" stop-color="#fff" stop-opacity="1"/><stop offset="0.75" stop-color="#fff" stop-opacity=".15"/><stop offset="1" stop-color="#fff" stop-opacity="0"/></linearGradient></defs>
<rect x="3" y="3" width="119" height="14" fill="url(#wv1292)"/>
<rect x="3" y="3" width="119" height="1" fill="url(#wv1292w)"/>
<rect x="3" y="16" width="119" height="1" fill="url(#wv1292w)"/>
<rect x="3.03" y="4" width="1" height="12" fill="#3a3a3a" opacity="0.37"/>
<rect x="4.03" y="4" width="0.30" height="12" fill="#fff" opacity="0.00"/>
<rect x="3.83" y="4" width="1" height="12" fill="#3a3a3a" opacity="0.45"/>
<rect x="4.83" y="4" width="0.30" height="12" fill="#fff" opacity="0.03"/>
<rect x="5.69" y="4" width="1" height="12" fill="#3a3a3a" opacity="0.53"/>
<rect x="6.69" y="4" width="0.45" height="12" fill="#fff" opacity="0.09"/>
<rect x="8.57" y="4" width="1" height="12" fill="#3a3a3a" opacity="0.60"/>
<rect x="9.57" y="4" width="0.63" height="12" fill="#fff" opacity="0.18"/>
<rect x="12.43" y="4" width="1" height="12" fill="#3a3a3a" opacity="0.67"/>
<rect x="13.43" y="4" width="0.81" height="12" fill="#fff" opacity="0.29"/>
<rect x="17.19" y="4" width="1" height="12" fill="#3a3a3a" opacity="0.74"/>
<rect x="18.19" y="4" width="0.97" height="12" fill="#fff" opacity="0.42"/>
<rect x="22.77" y="4" width="1" height="12" fill="#3a3a3a" opacity="0.80"/>
<rect x="23.77" y="4" width="1.12" height="12" fill="#fff" opacity="0.55"/>
<rect x="29.07" y="4" width="1" height="12" fill="#3a3a3a" opacity="0.85"/>
<rect x="30.07" y="4" width="1.24" height="12" fill="#fff" opacity="0.68"/>
<rect x="35.97" y="4" width="1" height="12" fill="#3a3a3a" opacity="0.89"/>
<rect x="36.97" y="4" width="1.34" height="12" fill="#fff" opacity="0.80"/>
<rect x="43.35" y="4" width="1" height="12" fill="#3a3a3a" opacity="0.92"/>
<rect x="44.35" y="4" width="1.42" height="12" fill="#fff" opacity="0.90"/>
<rect x="51.07" y="4" width="1" height="12" fill="#3a3a3a" opacity="0.94"/>
<rect x="52.07" y="4" width="1.47" height="12" fill="#fff" opacity="0.96"/>
<rect x="59.00" y="4" width="1" height="12" fill="#3a3a3a" opacity="0.95"/>
<rect x="60.00" y="4" width="1.50" height="12" fill="#fff" opacity="1.00"/>
<rect x="66.99" y="4" width="1" height="12" fill="#3a3a3a" opacity="0.95"/>
<rect x="67.99" y="4" width="1.50" height="12" fill="#fff" opacity="0.99"/>
<rect x="74.91" y="4" width="1" height="12" fill="#3a3a3a" opacity="0.94"/>
<rect x="75.91" y="4" width="1.47" height="12" fill="#fff" opacity="0.96"/>
<rect x="82.59" y="4" width="1" height="12" fill="#3a3a3a" opacity="0.91"/>
<rect x="83.59" y="4" width="1.41" height="12" fill="#fff" opacity="0.89"/>
<rect x="89.92" y="4" width="1" height="12" fill="#3a3a3a" opacity="0.88"/>
<rect x="90.92" y="4" width="1.33" height="12" fill="#fff" opacity="0.79"/>
<rect x="96.75" y="4" width="1" height="12" fill="#3a3a3a" opacity="0.84"/>
<rect x="97.75" y="4" width="1.23" height="12" fill="#fff" opacity="0.67"/>
<rect x="102.96" y="4" width="1" height="12" fill="#3a3a3a" opacity="0.79"/>
<rect x="103.96" y="4" width="1.10" height="12" fill="#fff" opacity="0.54"/>
<rect x="108.45" y="4" width="1" height="12" fill="#3a3a3a" opacity="0.73"/>
<rect x="109.45" y="4" width="0.95" height="12" fill="#fff" opacity="0.40"/>
<rect x="113.10" y="4" width="1" height="12" fill="#3a3a3a" opacity="0.67"/>
<rect x="114.10" y="4" width="0.79" height="12" fill="#fff" opacity="0.28"/>
<rect x="116.84" y="4" width="1" height="12" fill="#3a3a3a" opacity="0.59"/>
<rect x="117.84" y="4" width="0.61" height="12" fill="#fff" opacity="0.17"/>
<rect x="119.60" y="4" width="1" height="12" fill="#3a3a3a" opacity="0.52"/>
<rect x="120.60" y="4" width="0.42" height="12" fill="#fff" opacity="0.08"/>
<rect x="121.33" y="4" width="1" height="12" fill="#3a3a3a" opacity="0.44"/>
<rect x="122.33" y="4" width="0.30" height="12" fill="#fff" opacity="0.02"/>
<rect x="121.99" y="4" width="1" height="12" fill="#3a3a3a" opacity="0.36"/>
<rect x="122.99" y="4" width="0.30" height="12" fill="#fff" opacity="0.00"/></g>
<text font-size="12" x="675.5" y="741" letter-spacing="0.5">Rotx</text>
<text font-size="12" x="706.3" y="741" letter-spacing="0.45">Roty</text>
<text font-size="12" x="1292.5" y="741" letter-spacing="0.3">Dolly</text>
</svg>
</body></html>
